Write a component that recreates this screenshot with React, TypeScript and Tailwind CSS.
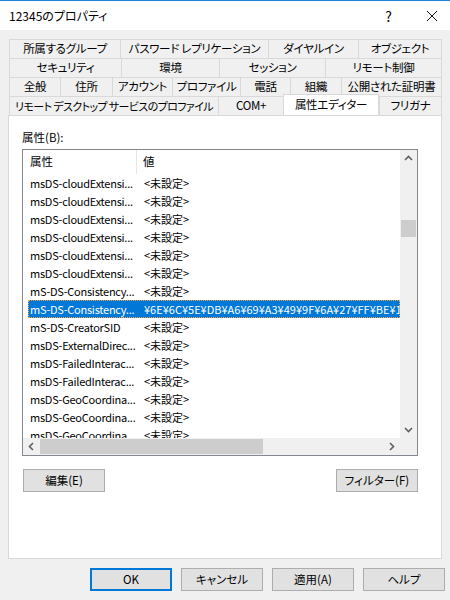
import React from 'react';

const FONT = "font-['Noto_Sans_CJK_JP',sans-serif] [font-feature-settings:'palt']";

const tabRows: { label: string; w: string; active?: boolean }[][] = [
  [
    { label: '所属するグループ', w: 'w-[111px]' },
    { label: 'パスワード レプリケーション', w: 'w-[148px]' },
    { label: 'ダイヤルイン', w: 'w-[90px]' },
    { label: 'オブジェクト', w: 'w-[84px]' },
  ],
  [
    { label: 'セキュリティ', w: 'w-[112px]' },
    { label: '環境', w: 'w-[98px]' },
    { label: 'セッション', w: 'w-[106px]' },
    { label: 'リモート制御', w: 'w-[117px]' },
  ],
  [
    { label: '全般', w: 'w-[51px]' },
    { label: '住所', w: 'w-[52px]' },
    { label: 'アカウント', w: 'w-[60px]' },
    { label: 'プロファイル', w: 'w-[68px]' },
    { label: '電話', w: 'w-[50px]' },
    { label: '組織', w: 'w-[51px]' },
    { label: '公開された証明書', w: 'w-[101px]' },
  ],
  [
    { label: 'リモート デスクトップ サービスのプロファイル', w: 'w-[209px]' },
    { label: 'COM+', w: 'w-[65px]' },
    { label: '属性エディター', w: 'w-[96px]', active: true },
    { label: 'フリガナ', w: 'w-[63px]' },
  ],
];

const rows: { name: string; value: string; selected?: boolean }[] = [
  { name: 'msDS-cloudExtensi...', value: '<未設定>' },
  { name: 'msDS-cloudExtensi...', value: '<未設定>' },
  { name: 'msDS-cloudExtensi...', value: '<未設定>' },
  { name: 'msDS-cloudExtensi...', value: '<未設定>' },
  { name: 'msDS-cloudExtensi...', value: '<未設定>' },
  { name: 'msDS-cloudExtensi...', value: '<未設定>' },
  { name: 'mS-DS-Consistency...', value: '<未設定>' },
  {
    name: 'mS-DS-Consistency...',
    value: '¥6E¥6C¥5E¥DB¥A6¥69¥A3¥49¥9F¥6A¥27¥FF¥BE¥1A¥CB¥47¥D0',
    selected: true,
  },
  { name: 'mS-DS-CreatorSID', value: '<未設定>' },
  { name: 'msDS-ExternalDirec...', value: '<未設定>' },
  { name: 'msDS-FailedInterac...', value: '<未設定>' },
  { name: 'msDS-FailedInterac...', value: '<未設定>' },
  { name: 'msDS-GeoCoordina...', value: '<未設定>' },
  { name: 'msDS-GeoCoordina...', value: '<未設定>' },
  { name: 'msDS-GeoCoordina...', value: '<未設定>' },
];

function Chevron({ dir }: { dir: 'up' | 'down' | 'left' | 'right' }) {
  const d = {
    up: 'M1 6 L4.5 2.5 L8 6',
    down: 'M1 3 L4.5 6.5 L8 3',
    left: 'M6 1 L2.5 4.5 L6 8',
    right: 'M3 1 L6.5 4.5 L3 8',
  }[dir];
  return (
    <svg width="9" height="9" viewBox="0 0 9 9">
      <path d={d} fill="none" stroke="#606060" strokeWidth="1.6" />
    </svg>
  );
}

function Button({ children, primary = false }: { children: React.ReactNode; primary?: boolean }) {
  return (
    <button
      type="button"
      className={`w-[82px] h-[23px] bg-[#e1e1e1] text-[11.5px] text-black flex items-center justify-center border ${
        primary ? 'border-[#0078d7] shadow-[inset_0_0_0_1px_#0078d7]' : 'border-[#adadad]'
      }`}
    >
      {children}
    </button>
  );
}

export default function App() {
  return (
    <div className={`w-[450px] h-[600px] bg-[#f0f0f0] text-black text-[11px] leading-none ${FONT} flex flex-col`}>
      {/* title bar */}
      <div className="h-[30px] bg-white border-t border-[#1883d7] flex items-center pl-[9px] pr-[12px] text-[12px]">
        <span className="flex-1">12345のプロパティ</span>
        <span className="text-[14px] mr-[34px]">?</span>
        <svg width="12" height="12" viewBox="0 0 12 12">
          <path d="M1 1 L11 11 M11 1 L1 11" stroke="#111" strokeWidth="1" />
        </svg>
      </div>

      <div className="ml-[8px] w-[434px] mt-[9px] flex flex-col">
        {/* tabs */}
        <div className="pl-[1px] flex flex-col text-[11.5px] tracking-[-0.3px]">
          {tabRows.map((row, i) => (
            <div key={i} className="flex h-[19px]">
              {row.map((t, j) => (
                <div
                  key={j}
                  className={`${t.w} shrink-0 flex items-center justify-center whitespace-nowrap overflow-hidden border-t border-l border-[#d9d9d9] ${
                    j === row.length - 1 ? 'border-r' : ''
                  } ${i === 3 && j === 0 ? 'text-[11px] tracking-[-0.6px]' : ''} ${
                    t.active
                      ? 'relative z-10 bg-white h-[21px] -mt-[2px] border-r border-[#d9d9d9]'
                      : 'bg-[#f0f0f0] h-[19px]'
                  }`}
                >
                  {t.label}
                </div>
              ))}
            </div>
          ))}
        </div>

        {/* panel */}
        <div className="h-[444px] bg-white border border-[#d9d9d9] flex flex-col pl-[13px]">
          <div className="mt-[16px] h-[12px] flex items-center text-[11.5px]">属性(B):</div>

          {/* list view */}
          <div className="mt-[5px] w-[396px] h-[307px] border border-[#828790] flex flex-col">
            <div className="flex flex-1 min-h-0">
              <div className="flex-1 min-w-0 flex flex-col">
                <div className="h-[24px] flex items-stretch shrink-0 text-[11.5px]">
                  <div className="w-[114px] pl-[7px] flex items-center border-r border-[#e5e5e5]">属性</div>
                  <div className="pl-[6px] flex items-center">値</div>
                </div>
                <div className="flex-1 overflow-hidden">
                  {rows.map((r, i) => (
                    <div
                      key={i}
                      className={`ml-[5px] h-[18px] flex items-center whitespace-nowrap overflow-hidden ${
                        r.selected
                          ? 'bg-[#0078d7] text-white outline-1 outline-dotted outline-[#f7a34a] -outline-offset-1'
                          : ''
                      }`}
                    >
                      <div className="w-[109px] shrink-0 pl-[2px] tracking-[-0.25px]">{r.name}</div>
                      <div className="pl-[7px]">{r.value}</div>
                    </div>
                  ))}
                </div>
              </div>
              {/* vertical scrollbar */}
              <div className="w-[17px] bg-[#f0f0f0] flex flex-col items-center shrink-0">
                <div className="h-[17px] flex items-center justify-center">
                  <Chevron dir="up" />
                </div>
                <div className="h-[53px]" />
                <div className="w-[15px] h-[17px] bg-[#cdcdcd]" />
                <div className="flex-1" />
                <div className="h-[17px] flex items-center justify-center">
                  <Chevron dir="down" />
                </div>
              </div>
            </div>
            {/* horizontal scrollbar */}
            <div className="h-[17px] flex shrink-0">
              <div className="flex-1 bg-[#f0f0f0] flex items-center">
                <div className="w-[17px] flex items-center justify-center">
                  <Chevron dir="left" />
                </div>
                <div className="w-[223px] h-[15px] bg-[#cdcdcd]" />
                <div className="flex-1" />
                <div className="w-[17px] flex items-center justify-center">
                  <Chevron dir="right" />
                </div>
              </div>
              <div className="w-[17px] bg-[#f0f0f0]" />
            </div>
          </div>

          <div className="mt-[13px] w-[396px] flex justify-between pl-[1px]">
            <Button>編集(E)</Button>
            <Button>フィルター(F)</Button>
          </div>
        </div>
      </div>

      {/* bottom buttons */}
      <div className="mt-[9px] flex justify-end gap-[9px] pr-[5px]">
        <Button primary>OK</Button>
        <Button>キャンセル</Button>
        <Button>適用(A)</Button>
        <Button>ヘルプ</Button>
      </div>
    </div>
  );
}
